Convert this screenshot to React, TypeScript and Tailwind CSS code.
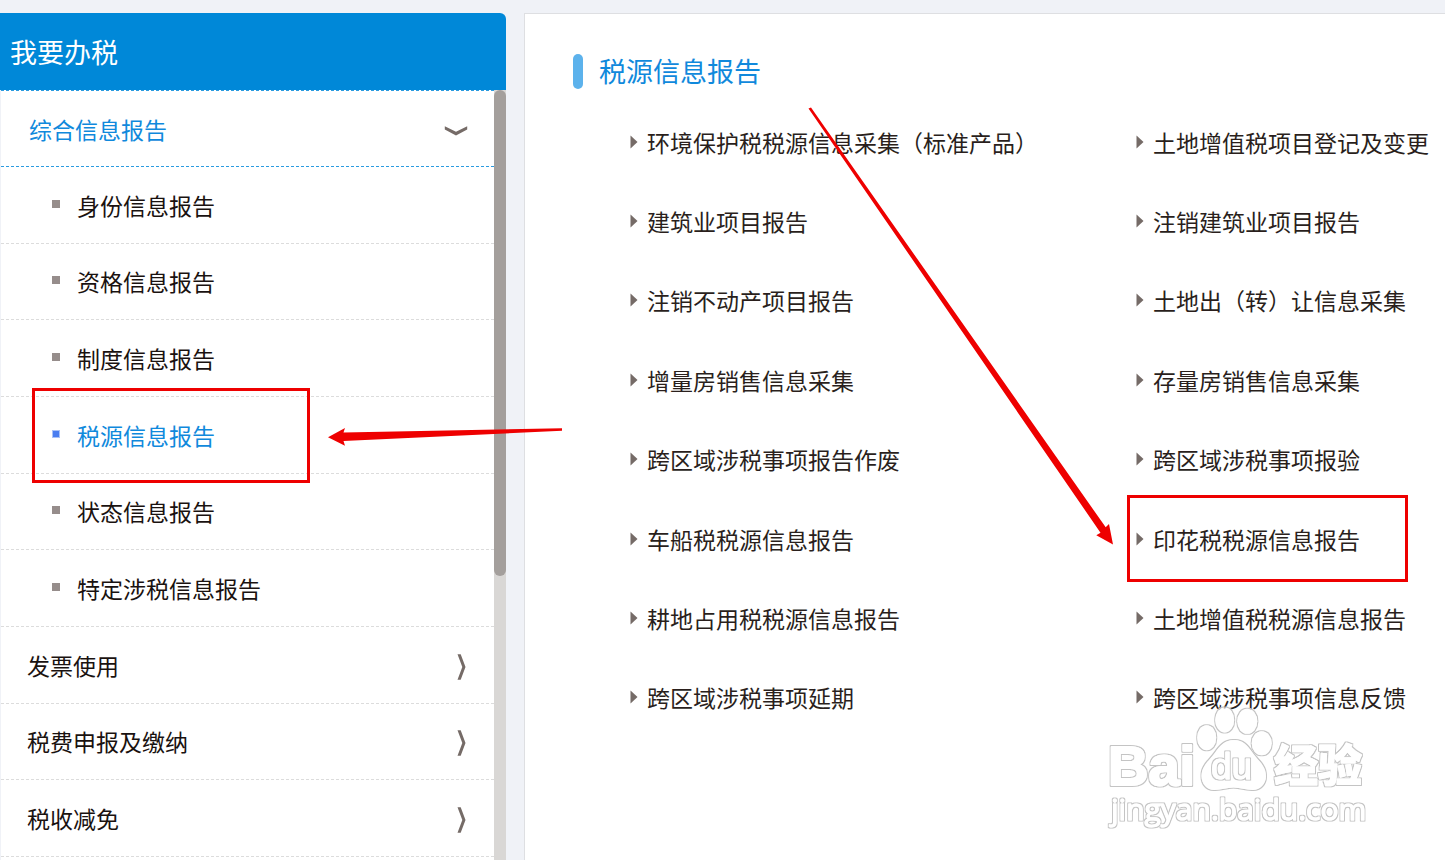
import React from "react";

type MenuItem = { label: string; active?: boolean };

const subMenu: MenuItem[] = [
  { label: "身份信息报告" },
  { label: "资格信息报告" },
  { label: "制度信息报告" },
  { label: "税源信息报告", active: true },
  { label: "状态信息报告" },
  { label: "特定涉税信息报告" },
];

const groups = ["发票使用", "税费申报及缴纳", "税收减免"];

const links = [
  "环境保护税税源信息采集（标准产品）",
  "土地增值税项目登记及变更",
  "建筑业项目报告",
  "注销建筑业项目报告",
  "注销不动产项目报告",
  "土地出（转）让信息采集",
  "增量房销售信息采集",
  "存量房销售信息采集",
  "跨区域涉税事项报告作废",
  "跨区域涉税事项报验",
  "车船税税源信息报告",
  "印花税税源信息报告",
  "耕地占用税税源信息报告",
  "土地增值税税源信息报告",
  "跨区域涉税事项延期",
  "跨区域涉税事项信息反馈",
];

function ChevronDown() {
  return (
    <svg className="mt-1 h-3 w-6" viewBox="0 0 24 12" aria-hidden="true">
      <path d="M.8 1.200v3.400L12 10.600l11.200-6v-3.400L12 6.800z" fill="#756b67" />
    </svg>
  );
}

function ChevronRight() {
  return (
    <svg className="mt-1 h-7 w-3" viewBox="0 0 12 28" aria-hidden="true">
      <path d="M1.500 1.300h3.200L9.500 14 4.700 26.700H1.500L6.300 14z" fill="#756b67" />
    </svg>
  );
}

function Sidebar() {
  return (
    <aside className="flex w-[506px] shrink-0 flex-col">
      <h2 className="flex h-[77px] shrink-0 items-center rounded-tr-md bg-[#0088d8] pl-2.5 text-[27px] text-white">
        我要办税
      </h2>
      <div className="flex min-h-0 flex-1">
        <nav className="min-w-0 flex-1 overflow-hidden border-l border-[#f0f2f7] bg-white">
          <button
            type="button"
            aria-expanded="true"
            className="flex h-[77px] w-full items-center justify-between border-y border-dashed border-[#2b9be0] pr-[26px] pl-7 text-[#1089dc]"
          >
            综合信息报告
            <ChevronDown />
          </button>
          <ul className="grid h-[460px] grid-rows-6">
            {subMenu.map((item) => (
              <li key={item.label} className="border-b border-dashed border-[#dcdcdc]">
                <a
                  href="#"
                  aria-current={item.active ? "page" : undefined}
                  className={
                    item.active
                      ? "flex h-full items-center gap-[17px] pl-[51px] text-[#1089dc]"
                      : "flex h-full items-center gap-[17px] pl-[51px] text-[#1a1210]"
                  }
                >
                  <span
                    className={
                      item.active
                        ? "mb-0.5 size-2 border border-[#a9c2f8] bg-[#4a7df0]"
                        : "mb-0.5 size-2 bg-[#968d8b]"
                    }
                  />
                  {item.label}
                </a>
              </li>
            ))}
          </ul>
          <ul className="grid h-[230px] grid-rows-3">
            {groups.map((label) => (
              <li key={label} className="border-b border-dashed border-[#dcdcdc]">
                <button
                  type="button"
                  aria-expanded="false"
                  className="flex h-full w-full items-center justify-between pr-[26px] pl-[26px] text-[#1a1210]"
                >
                  {label}
                  <ChevronRight />
                </button>
              </li>
            ))}
          </ul>
        </nav>
        <div className="w-3 shrink-0 bg-[#d9d7d5]">
          <div className="h-[486px] rounded-md bg-[#a49f9c]" />
        </div>
      </div>
    </aside>
  );
}

function Content() {
  return (
    <main className="min-w-0 flex-1 border-t border-l border-[#dedfe2] bg-white pl-12">
      <h1 className="mt-[39px] flex items-center gap-4 text-[27px] leading-9 text-[#1089dc]">
        <span className="h-[35px] w-2.5 rounded-full bg-[#5cb2ec]" />
        税源信息报告
      </h1>
      <ul className="mt-[13px] grid h-[635px] grid-cols-[minmax(0,1fr)_309px] grid-rows-8 pl-[57px]">
        {links.map((label) => (
          <li key={label} className="flex items-center">
            <a href="#" className="flex items-center gap-[9px] whitespace-nowrap text-[#2a1f1c]">
              <svg className="h-3.5 w-2" viewBox="0 0 8 14" aria-hidden="true">
                <path d="M.5.5 7.500 7 .5 13.500z" fill="#756b67" />
              </svg>
              {label}
            </a>
          </li>
        ))}
      </ul>
    </main>
  );
}

function Watermark() {
  return (
    <svg
      className="pointer-events-none absolute top-[700px] left-[1100px] h-[140px] w-[280px]"
      viewBox="0 0 280 140"
      aria-label="Baidu 经验"
    >
      <defs>
        <filter id="edge" x="-10%" y="-10%" width="120%" height="120%">
          <feMorphology in="SourceAlpha" operator="dilate" radius="1" result="grown" />
          <feGaussianBlur in="grown" stdDeviation="0.7" result="soft" />
          <feFlood floodColor="#c4c4c4" />
          <feComposite in2="soft" operator="in" result="rim" />
          <feComposite in="rim" in2="SourceAlpha" operator="out" result="outer" />
          <feComponentTransfer in="SourceGraphic" result="face">
            <feFuncA type="linear" slope="0.75" />
          </feComponentTransfer>
          <feMerge>
            <feMergeNode in="outer" />
            <feMergeNode in="face" />
          </feMerge>
        </filter>
      </defs>
      <g fill="#ffffff" stroke="#ffffff" strokeLinejoin="round">
        <g filter="url(#edge)" strokeWidth="2">
          <text x="8" y="85" fontSize="56" fontWeight="700" fontFamily="Liberation Sans, sans-serif">
            Bai
          </text>
        </g>
        <g filter="url(#edge)" strokeWidth="0">
          <ellipse cx="106.700" cy="37.700" rx="9.500" ry="12.500" />
          <ellipse cx="124.700" cy="20" rx="9.500" ry="12.500" />
          <ellipse cx="147.300" cy="21.300" rx="10" ry="12.500" />
          <ellipse cx="161.700" cy="43.300" rx="10" ry="12" />
          <path d="M134 40c9 0 13 5 18 12 5 8 14 13 14 24 0 8-6 14-13.500 14-7 0-12-2.500-19-2.500s-12 2.500-19 2.500c-7.500 0-13-6-13-14 0-11 9-16 14-24 5-7 9.500-12 18.500-12z" />
        </g>
        <g filter="url(#edge)" strokeWidth="1">
          <text x="111" y="79" fontSize="37" fontFamily="Liberation Sans, sans-serif">
            du
          </text>
          <text x="11" y="120" fontSize="30" fontFamily="Open Sans, sans-serif">
            jingyan.baidu.com
          </text>
        </g>
        <g filter="url(#edge)" strokeWidth="1">
          <text
            x="174"
            y="82"
            fontSize="44"
            fontWeight="900"
            fontFamily="Liberation Sans, Noto Sans CJK SC, sans-serif"
          >
            经验
          </text>
        </g>
      </g>
    </svg>
  );
}

function Annotations() {
  return (
    <div className="pointer-events-none absolute inset-0">
      <div className="absolute top-[388px] left-[32px] h-[95px] w-[278px] border-3 border-[#ee0000]" />
      <div className="absolute top-[495px] left-[1127px] h-[87px] w-[281px] border-3 border-[#ee0000]" />
      <svg className="absolute top-0 left-0 h-[860px] w-[1445px]" viewBox="0 0 1445 860" aria-hidden="true">
        <g fill="#ee0000">
          <path d="M328 437.300 345 428l-1.500 4.500L562 428.200v2.600L343.500 441l1.500 4.800z" />
          <path d="M808.500 108.500 811 107.500 1105.700 527.300 1109 524 1113 544.500 1096.300 535.200 1100.500 532.700z" />
        </g>
      </svg>
    </div>
  );
}

export default function App() {
  return (
    <div className="relative flex h-screen gap-[18px] overflow-hidden bg-[#f0f2f7] pt-[13px] font-['Noto_Sans_CJK_SC',sans-serif] text-[23px] leading-8">
      <Sidebar />
      <Content />
      <Watermark />
      <Annotations />
    </div>
  );
}
